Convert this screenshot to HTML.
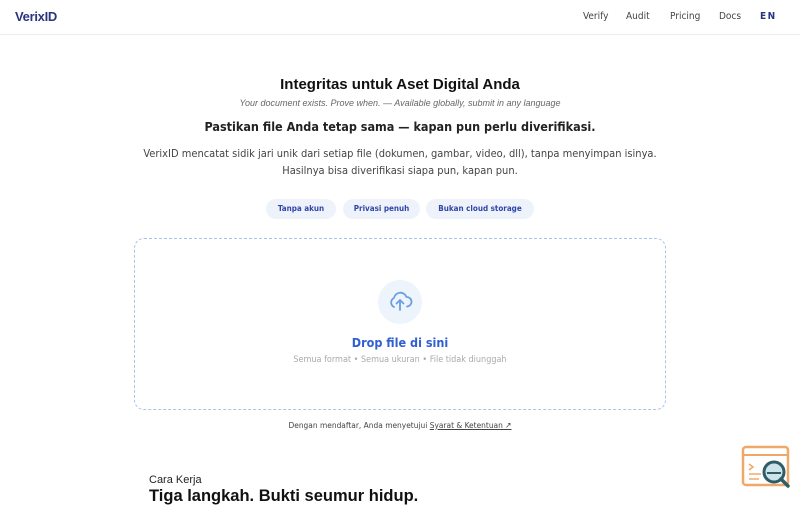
<!DOCTYPE html>
<html><head><meta charset="utf-8"><style>
*{margin:0;padding:0;box-sizing:border-box}
body{width:800px;height:500px;overflow:hidden;background:#fff;font-family:"DejaVu Sans Condensed","DejaVu Sans",sans-serif;color:#333;position:relative}
.nav{height:35px;border-bottom:1px solid #ececec;position:relative}
.logo{position:absolute;left:15px;top:9px;font:bold 13px "Liberation Sans",sans-serif;color:#2a3580;letter-spacing:-0.3px}
.nl{position:absolute;top:11px;font:10px "DejaVu Sans Condensed","DejaVu Sans",sans-serif;color:#444}
.c{position:absolute;left:0;width:800px;text-align:center}
.pill{position:absolute;top:199px;height:20px;border-radius:10px;background:#eef3fb;font:bold 8px "DejaVu Sans Condensed","DejaVu Sans",sans-serif;color:#2f45a8;line-height:20px;text-align:center}
.drop{position:absolute;left:134px;top:238px;width:532px;height:172px;border:1.5px dashed #a3c6ee;border-radius:10px}
.circ{position:absolute;left:378px;top:280px;width:44px;height:44px;border-radius:50%;background:#eef4fc}
</style></head><body>
<div class="nav"><div class="logo">VerixID</div>
<span class="nl" style="left:583px">Verify</span><span class="nl" style="left:626px">Audit</span><span class="nl" style="left:670px">Pricing</span><span class="nl" style="left:719px">Docs</span><span class="nl" style="left:760px;font-weight:bold;color:#2a3580;letter-spacing:1.5px">EN</span></div>
<div class="c" style="top:76px;font:bold 15px 'Liberation Sans',sans-serif;color:#111">Integritas untuk Aset Digital Anda</div>
<div class="c" style="top:98px;font:italic 9px 'Liberation Sans',sans-serif;color:#666">Your document exists. Prove when. — Available globally, submit in any language</div>
<div class="c" style="top:119px;font:bold 12.5px 'DejaVu Sans Condensed','DejaVu Sans',sans-serif;color:#222">Pastikan file Anda tetap sama — kapan pun perlu diverifikasi.</div>
<div class="c" style="top:145px;font:11px/17px 'DejaVu Sans Condensed','DejaVu Sans',sans-serif;color:#444">VerixID mencatat sidik jari unik dari setiap file (dokumen, gambar, video, dll), tanpa menyimpan isinya.<br>Hasilnya bisa diverifikasi siapa pun, kapan pun.</div>
<div class="pill" style="left:266px;width:70px">Tanpa akun</div>
<div class="pill" style="left:343px;width:77px">Privasi penuh</div>
<div class="pill" style="left:426px;width:108px">Bukan cloud storage</div>
<div class="drop"></div>
<div class="circ"><svg width="44" height="44" viewBox="0 0 44 44" fill="none" stroke="#6a9fe0" stroke-width="1.8" stroke-linecap="round" stroke-linejoin="round"><path d="M16 27a5 5 0 0 1 0-9 6.5 6.5 0 0 1 12.5-1 4.5 4.5 0 0 1 0.5 9.5"/><path d="M22 30v-10M18.5 23.5 22 20l3.5 3.5"/></svg></div>
<div class="c" style="top:335px;font:bold 12.5px 'DejaVu Sans Condensed','DejaVu Sans',sans-serif;color:#2f5fd0">Drop file di sini</div>
<div class="c" style="top:355px;font:9px 'DejaVu Sans Condensed','DejaVu Sans',sans-serif;color:#aaa">Semua format • Semua ukuran • File tidak diunggah</div>
<div class="c" style="top:420px;font:8.3px 'DejaVu Sans Condensed','DejaVu Sans',sans-serif;color:#444">Dengan mendaftar, Anda menyetujui <u>Syarat &amp; Ketentuan ↗</u></div>
<div style="position:absolute;left:149px;top:474px;font:11px 'Liberation Sans',sans-serif;color:#222">Cara Kerja</div>
<div style="position:absolute;left:149px;top:487px;font:bold 16.5px 'Liberation Sans',sans-serif;color:#111">Tiga langkah. Bukti seumur hidup.</div>
<svg style="position:absolute;left:740px;top:444px" width="54" height="46" viewBox="0 0 54 46" fill="none">
<rect x="3" y="3" width="45" height="38" rx="3" stroke="#f0a868" stroke-width="2.5"/>
<line x1="3" y1="11" x2="48" y2="11" stroke="#f0a868" stroke-width="2"/>
<path d="M9 20l4 3-4 3M9 30h12M9 35h10" stroke="#f0a868" stroke-width="1.5"/>
<circle cx="34" cy="28" r="10" fill="#cfe3ea" stroke="#2f5d66" stroke-width="3"/>
<line x1="27" y1="29" x2="41" y2="29" stroke="#2f5d66" stroke-width="2"/>
<line x1="41" y1="35" x2="48" y2="42" stroke="#2f5d66" stroke-width="3.5" stroke-linecap="round"/>
</svg>
</body></html>
